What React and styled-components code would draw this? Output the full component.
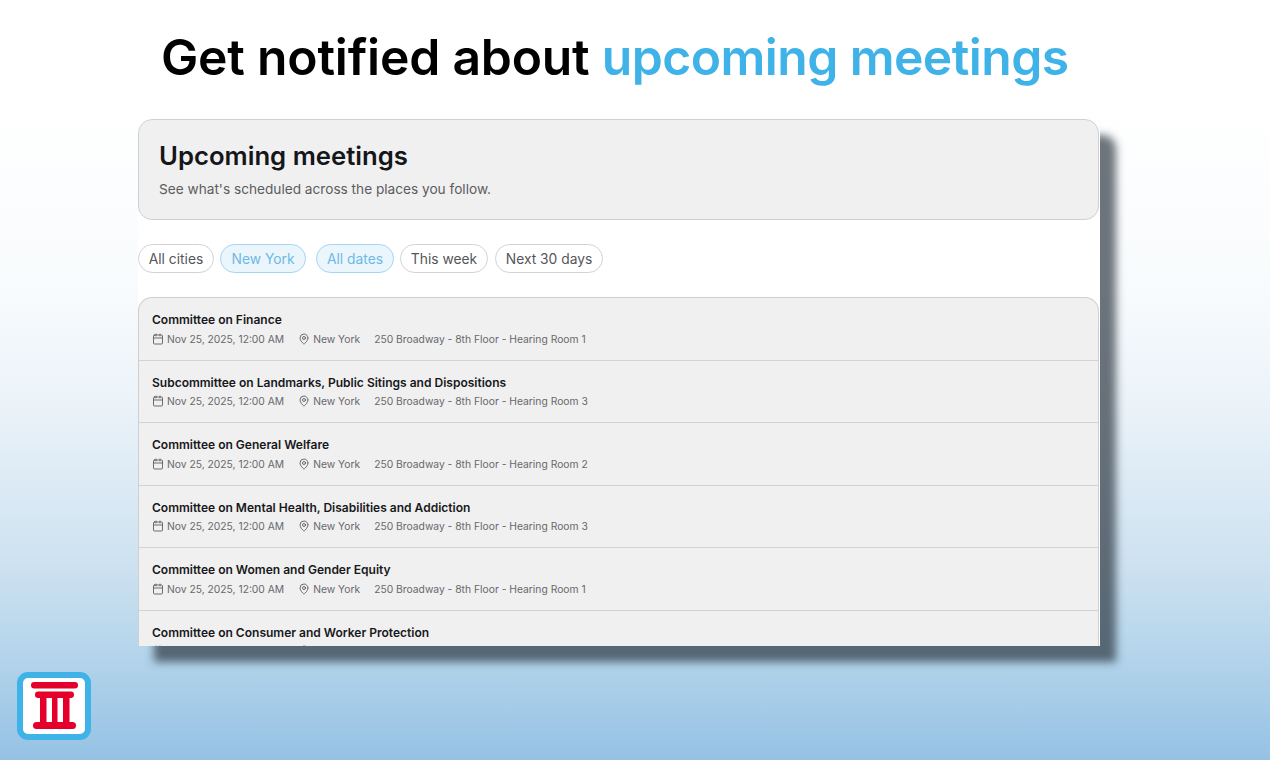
import React from 'react';
import styled, { createGlobalStyle } from 'styled-components';
import { Calendar, MapPin } from 'lucide-react';

const GlobalStyle = createGlobalStyle`
  html, body {
    margin: 0;
    padding: 0;
  }
  body {
    font-family: Inter, "Liberation Sans", sans-serif;
  }
`;

const Page = styled.div`
  width: 1270px;
  height: 760px;
  overflow: hidden;
  box-sizing: border-box;
  padding-top: 27px;
  background: linear-gradient(180deg, #ffffff 0%, #ffffff 13%, #f8fbfd 38%, #ebf3f9 53%, #cee2f1 74%, #b9d7ec 84%, #95c2e4 100%);
`;

const Headline = styled.h1`
  margin: 0;
  height: 60px;
  padding-left: 161px;
  font-size: 49.8px;
  line-height: 60px;
  font-weight: 600;
  letter-spacing: -0.2px;
  color: #000;
  white-space: nowrap;
`;

const Accent = styled.span`
  color: #3fb3e8;
  letter-spacing: -0.56px;
`;

const Shot = styled.div`
  width: 962px;
  height: 527px;
  margin: 32px 0 0 138px;
  background: #fff;
  overflow: hidden;
  border-radius: 14px 14px 0 0;
  box-shadow: 16px 16px 9px rgba(40, 50, 60, 0.68);
  clip-path: inset(0 -40px -40px 0);
`;

const HeaderPanel = styled.header`
  box-sizing: border-box;
  height: 101px;
  width: 961px;
  padding: 20px 20px 0;
  background: #f0f0f0;
  border: 1px solid #cfcfcf;
  border-radius: 14px;
`;

const Title = styled.h2`
  margin: 0;
  font-size: 25.7px;
  line-height: 32px;
  font-weight: 600;
  color: #14161a;
`;

const Subtitle = styled.p`
  margin: 7px 0 0;
  font-size: 13.65px;
  line-height: 20px;
  color: #5c5c5f;
`;

const Filters = styled.div`
  display: flex;
  height: 29px;
  margin-top: 24px;
`;

const Chip = styled.button`
  box-sizing: border-box;
  height: 29px;
  width: ${(p) => p.$width}px;
  margin-right: ${(p) => p.$gap}px;
  padding: 0;
  border-radius: 15px;
  border: 1px solid ${(p) => (p.$active ? '#a4d5f2' : '#d2d2d2')};
  background: ${(p) => (p.$active ? '#eaf5fc' : '#fff')};
  color: ${(p) => (p.$active ? '#6fb9e6' : '#56565a')};
  font-family: inherit;
  font-size: 13.8px;
`;

const List = styled.div`
  margin-top: 24px;
  width: 961px;
  background: #f0f0f0;
  border: 1px solid #cfcfcf;
  border-bottom: 0;
  border-radius: 14px 14px 0 0;
  box-sizing: border-box;
`;

const Row = styled.div`
  box-sizing: border-box;
  height: 62.5px;
  padding: 14px 13px 0;
  border-bottom: 1px solid #d3d3d3;
`;

const RowTitle = styled.div`
  font-size: 12.03px;
  line-height: 16px;
  font-weight: 600;
  color: #17181b;
`;

const Meta = styled.div`
  display: flex;
  align-items: center;
  margin-top: 2.5px;
  height: 16px;
  font-size: 10.3px;
  color: #68686c;
  white-space: nowrap;
`;

const MetaItem = styled.span`
  display: flex;
  align-items: center;
  gap: 3px;
  margin-right: 14px;
  svg {
    flex: none;
    color: #55555a;
  }
`;

const Logo = styled.svg`
  display: block;
  margin: 26px 0 0 17px;
`;

const chips = [
  { label: 'All cities', width: 76, gap: 6 },
  { label: 'New York', width: 86, gap: 10, active: true },
  { label: 'All dates', width: 78, gap: 6, active: true },
  { label: 'This week', width: 88, gap: 7 },
  { label: 'Next 30 days', width: 108, gap: 0 },
];

const meetings = [
  { name: 'Committee on Finance', room: 1 },
  { name: 'Subcommittee on Landmarks, Public Sitings and Dispositions', room: 3 },
  { name: 'Committee on General Welfare', room: 2 },
  { name: 'Committee on Mental Health, Disabilities and Addiction', room: 3 },
  { name: 'Committee on Women and Gender Equity', room: 1 },
  { name: 'Committee on Consumer and Worker Protection', room: 2 },
];

const App = () => (
  <Page>
    <GlobalStyle />
    <Headline>
      Get notified about <Accent>upcoming meetings</Accent>
    </Headline>
    <Shot>
      <HeaderPanel>
        <Title>Upcoming meetings</Title>
        <Subtitle>See what's scheduled across the places you follow.</Subtitle>
      </HeaderPanel>
      <Filters>
        {chips.map((c) => (
          <Chip key={c.label} $width={c.width} $gap={c.gap} $active={c.active}>
            {c.label}
          </Chip>
        ))}
      </Filters>
      <List>
        {meetings.map((m) => (
          <Row key={m.name}>
            <RowTitle>{m.name}</RowTitle>
            <Meta>
              <MetaItem>
                <Calendar size={12} strokeWidth={1.7} />
                Nov 25, 2025, 12:00 AM
              </MetaItem>
              <MetaItem>
                <MapPin size={12} strokeWidth={1.7} />
                New York
              </MetaItem>
              <span>250 Broadway - 8th Floor - Hearing Room {m.room}</span>
            </Meta>
          </Row>
        ))}
      </List>
    </Shot>
    <Logo width="74" height="68" viewBox="0 0 74 68">
      <rect x="3" y="3" width="68" height="62" rx="8" fill="#fff" stroke="#3fb3e8" strokeWidth="6" />
      <g fill="#e4002b">
        <rect x="14" y="10" width="47" height="6.5" rx="3.2" />
        <rect x="18" y="19.5" width="39" height="6.5" rx="3.2" />
        <rect x="23" y="24" width="6.5" height="28" />
        <rect x="35" y="24" width="5.5" height="28" />
        <rect x="46" y="24" width="6.5" height="28" />
        <rect x="16" y="50" width="43" height="7" rx="3.5" />
      </g>
    </Logo>
  </Page>
);

export default App;
